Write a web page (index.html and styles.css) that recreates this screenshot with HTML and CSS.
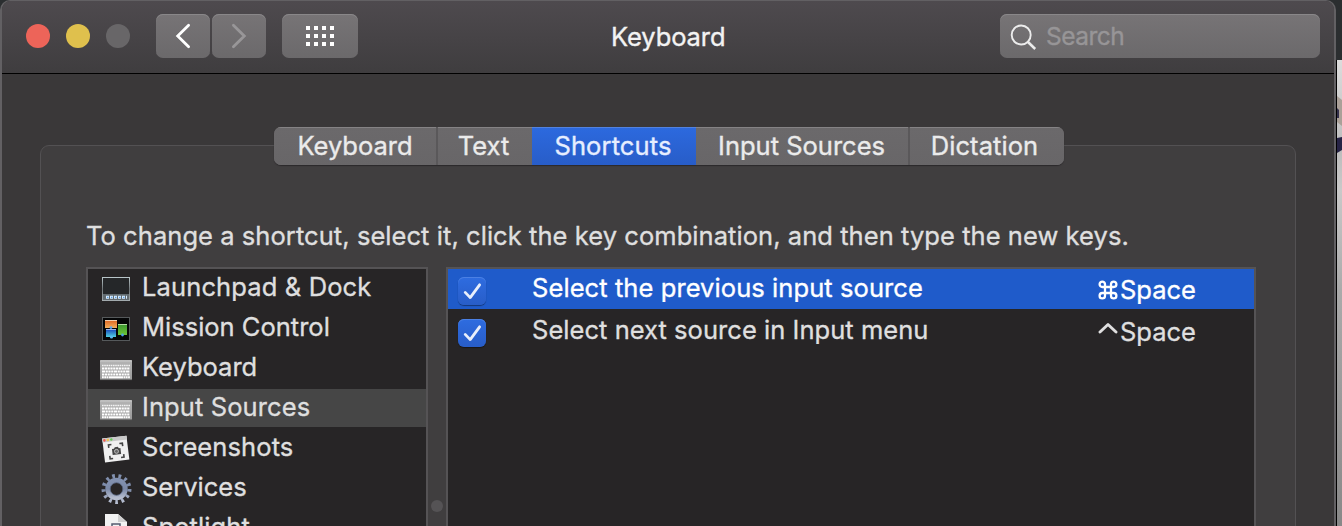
FILE: index.html
```html
<!DOCTYPE html>
<html lang="en">
<head>
<meta charset="utf-8">
<title>Keyboard</title>
<link rel="stylesheet" href="styles.css">
</head>
<body>
<svg class="defs" width="0" height="0">
  <defs>
    <linearGradient id="alu" x1="0" y1="0" x2="0" y2="1"><stop offset="0" stop-color="#b5b5b5"/><stop offset="1" stop-color="#999"/></linearGradient>
    <linearGradient id="frame" x1="0" y1="0" x2="0" y2="1"><stop offset="0" stop-color="#b8c5c8"/><stop offset=".5" stop-color="#70777a"/><stop offset="1" stop-color="#a2aaad"/></linearGradient>
    <linearGradient id="orange" x1="0" y1="0" x2="0" y2="1"><stop offset="0" stop-color="#dd6422"/><stop offset="1" stop-color="#f5b05a"/></linearGradient>
    <linearGradient id="green" x1="0" y1="0" x2="0" y2="1"><stop offset="0" stop-color="#3a9632"/><stop offset="1" stop-color="#6cc636"/></linearGradient>
    <linearGradient id="blue" x1="0" y1="0" x2="0" y2="1"><stop offset="0" stop-color="#1741ba"/><stop offset="1" stop-color="#4fd0e0"/></linearGradient>
    <linearGradient id="steel" x1="0" y1="0" x2="0" y2="1"><stop offset="0" stop-color="#8291b0"/><stop offset=".5" stop-color="#7a88a6"/><stop offset="1" stop-color="#b5bdcf"/></linearGradient>
    <symbol id="keys" viewBox="0 0 32 22">
      <rect x="0" y="0" width="32" height="20" rx="1" fill="url(#alu)"/>
      <path d="M0 1H32" stroke="#c9c9c9" stroke-width="1"/>
      <path d="M0 19.6H32" stroke="#6e6e6e" stroke-width="1"/>
      <path d="M2 5.5H30" stroke="#f4f4f4" stroke-width="1.4" stroke-dasharray="1.6 .6"/>
      <path d="M2 8.5H30M2 14.5H30" stroke="#fff" stroke-width="2.1" stroke-dasharray="2.2 .6"/>
      <path d="M2 11.5H30" stroke="#fff" stroke-width="2.1" stroke-dasharray="3 .6 2.2 .6 2.2 .6 2.2 .6"/>
      <path d="M2 17.3H8.5M23.5 17.3H30" stroke="#fff" stroke-width="2" stroke-dasharray="1.8 .5"/>
      <path d="M9 17.3H23" stroke="#fff" stroke-width="2"/>
    </symbol>
  </defs>
</svg>
<div class="desktop">
  <main class="window">
    <header class="titlebar">
      <div class="lights"><i class="light red"></i><i class="light yellow"></i><i class="light gray"></i></div>
      <div class="nav">
        <button class="tool"><svg width="54" height="44" viewBox="0 0 54 44" fill="none"><path d="M32.6 11.2L21.7 22L32.6 32.8" stroke="#fff" stroke-width="2.8" stroke-linecap="round"/></svg></button>
        <button class="tool"><svg width="54" height="44" viewBox="0 0 54 44" fill="none"><path d="M21.4 11.2L32.3 22L21.4 32.8" stroke="#989698" stroke-width="2.8" stroke-linecap="round"/></svg></button>
      </div>
      <button class="tool grid"><svg width="76" height="44" viewBox="0 0 76 44" fill="none"><path d="M24 14H52M24 22H52M24 30H52" stroke="#fff" stroke-width="4" stroke-dasharray="4 4"/></svg></button>
      <h1 class="title">Keyboard</h1>
      <div class="search">
        <svg width="28" height="28" viewBox="0 0 28 28" fill="none" stroke="#ececec"><circle cx="11.2" cy="11" r="9.5" stroke-width="1.9"/><path d="M18 18L25.2 25" stroke-width="2.5"/></svg>
        <span class="hint">Search</span>
      </div>
    </header>
    <section class="panel">
      <nav class="tabs">
        <div class="tab t1"><span>Keyboard</span></div>
        <div class="tab t2"><span>Text</span></div>
        <div class="tab t3 active"><span>Shortcuts</span></div>
        <div class="tab t4"><span>Input Sources</span></div>
        <div class="tab t5"><span>Dictation</span></div>
      </nav>
      <p class="intro"><span>To change a shortcut, select it, click the key combination, and then type the new keys.</span></p>
      <div class="split">
        <ul class="list">
          <li><svg class="icon" width="32" height="38" viewBox="0 0 32 38"><rect x="2.5" y="8.5" width="27" height="23" fill="#252729" stroke="url(#frame)"/><rect x="3" y="25" width="26" height="6" fill="#626b70"/><path d="M6 28.3H27" stroke="#d8edff" stroke-width="3" stroke-dasharray="3 1"/><path d="M7 28.4H26" stroke="#5c9de0" stroke-width="1.4" stroke-dasharray="1.4 2.6"/></svg><span class="l1">Launchpad &amp; Dock</span></li>
          <li><svg class="icon" width="32" height="38" viewBox="0 0 32 38"><rect x="2.5" y="8.5" width="27" height="23" fill="#050607" stroke="#55595b"/><rect x="5" y="11" width="12" height="8" fill="url(#orange)"/><path d="M5 11.5H17" stroke="#f4cfae"/><rect x="18" y="15" width="9" height="11" fill="url(#green)"/><path d="M18 15.5H27" stroke="#b5dea4"/><rect x="6" y="20" width="10" height="8" fill="url(#blue)"/><path d="M6 20.5H16" stroke="#9fb6e8"/><circle cx="11" cy="18.6" r="1.4" fill="#62a9ee"/><circle cx="22.5" cy="26" r="1.4" fill="#4c9ee8"/><circle cx="11.5" cy="28" r="1.6" fill="#5abaf2"/></svg><span class="l2">Mission Control</span></li>
          <li><svg class="icon keys" width="32" height="22"><use href="#keys"/></svg><span class="l3">Keyboard</span></li>
          <li class="selected"><svg class="icon keys" width="32" height="22"><use href="#keys"/></svg><span class="l4">Input Sources</span></li>
          <li><svg class="icon" width="32" height="38" viewBox="0 0 32 38"><g transform="rotate(-7 16 20)"><rect x="3.5" y="8" width="24.5" height="24" fill="#f0f0f0"/><rect x="3.5" y="8" width="24.5" height="4" fill="#c9c9c9"/><circle cx="5.5" cy="10" r="1.3" fill="#f25b52"/><circle cx="9" cy="10" r="1.3" fill="#edc14c"/><circle cx="12.5" cy="10" r="1.3" fill="#68c95c"/><path d="M9 18V15H12M20 15H23V18M23 26V29H20M12 29H9V26" fill="none" stroke="#444" stroke-width="1.6"/><path d="M12 19.5H14L15 18H18L19 19.5H20.5V25.5H12Z" fill="#444"/><circle cx="16.2" cy="22.4" r="2" fill="#666" stroke="#ccc" stroke-width=".8"/></g></svg><span class="l5">Screenshots</span></li>
          <li><svg class="icon" width="32" height="38" viewBox="0 0 32 38"><g fill="none" stroke="url(#steel)"><circle cx="16.5" cy="20" r="8.7" stroke-width="5"/><circle cx="16.5" cy="20" r="13" stroke-width="4" stroke-dasharray="2.7 3.583"/></g><circle cx="16.5" cy="20" r="6.3" fill="none" stroke="#56637f" stroke-width=".8"/></svg><span class="l6">Services</span></li>
          <li><svg class="icon" width="32" height="38" viewBox="0 0 32 38"><path d="M5 5H18L27 13V38H5Z" fill="#f2f2f2"/><path d="M18 5V13H27Z" fill="#d0d0d0"/><path d="M12 22V15H20V22M14 18H18" fill="none" stroke="#555c70" stroke-width="1.5"/></svg><span class="l7">Spotlight</span></li>
        </ul>
        <div class="divider"><i></i></div>
        <div class="table">
          <div class="row on">
            <svg class="check" width="28" height="28" viewBox="0 0 28 28" fill="none"><path d="M7.2 15.4L12.2 20.6L21.6 7.8" stroke="#e9effb" stroke-width="2.8" stroke-linecap="round" stroke-linejoin="round"/></svg>
            <span class="name n1">Select the previous input source</span>
            <span class="combo"><svg width="20" height="20" viewBox="0 0 20 20" fill="none" stroke="#fff" stroke-width="2.3"><path d="M7 7H13V13H7ZM7 7V4.300A2.700 2.700 0 1 0 4.300 7H7M13 7V4.300A2.700 2.700 0 1 1 15.700 7H13M13 13H15.700A2.700 2.700 0 1 1 13 15.700V13M7 13H4.300A2.700 2.700 0 1 0 7 15.700V13"/></svg><span class="key">Space</span></span>
          </div>
          <div class="row">
            <svg class="check" width="28" height="28" viewBox="0 0 28 28" fill="none"><path d="M7.2 15.4L12.2 20.6L21.6 7.8" stroke="#e9effb" stroke-width="2.8" stroke-linecap="round" stroke-linejoin="round"/></svg>
            <span class="name n2">Select next source in Input menu</span>
            <span class="combo"><svg width="20" height="20" viewBox="0 0 20 20" fill="none" stroke="#dfdfdf" stroke-width="2.9" stroke-linecap="round" stroke-linejoin="round"><path d="M2 10L10 2.5L18 10"/></svg><span class="key">Space</span></span>
          </div>
        </div>
      </div>
    </section>
  </main>
  <aside class="behind"><svg width="5" height="466" viewBox="0 0 5 466"><path d="M0 36L5 40V66L0 62Z" fill="#aaa098"/><path d="M0 48L2 50V58H0Z" fill="#33304b"/><path d="M0 78L5 77V90L0 93Z" fill="#262345"/></svg></aside>
</div>
</body>
</html>
```
FILE: styles.css
```css
* { box-sizing: border-box; }
body { margin: 0; overflow: hidden; background: #000; font-family: Inter, "Liberation Sans", sans-serif; font-size: 25.5px; line-height: 38px; color: #dfdfdf; white-space: nowrap; -webkit-text-stroke: .35px currentColor; }
.defs { position: absolute; }
svg { display: block; flex: none; }
.desktop { display: flex; width: 1342px; height: 526px; overflow: hidden; background: linear-gradient(#2b2e30 60px, #000 60px); }
.window { flex: none; width: 1336px; height: 540px; background: #3a3839; border: solid #626063; border-width: 1px 2px 0; border-radius: 10px 10px 0 0; overflow: hidden; margin-right: 1px; }
.behind { width: 5px; margin-top: 60px; height: 466px; background: linear-gradient(#dcdcdc, #bcbcbc 90px, #c9c9c9 130px, #aaa 230px, #888); }

.titlebar { display: flex; height: 73px; padding: 13px 14px 0 24px; background: linear-gradient(#4e4a4e, #3f3d3f); border-bottom: 1px solid #000; }
.lights { display: flex; gap: 16px; padding-top: 10px; width: 130px; }
.light { width: 24px; height: 24px; border-radius: 50%; }
.red { background: #ed6459; }
.yellow { background: #dfc04d; }
.gray { background: #686668; }
.nav { display: flex; gap: 2px; }
.tool { padding: 0; border: 0; width: 54px; height: 44px; border-radius: 7px; background: linear-gradient(#777476, #6b696b); box-shadow: inset 0 1px #898789; }
.grid { width: 76px; margin-left: 16px; }
.title { margin: 4px 0 0 253px; width: 389px; font-size: 25.5px; font-weight: 400; color: #f3f3f3; letter-spacing: -.1px; }
.search { display: flex; width: 320px; height: 44px; padding: 10px 0 0 10px; border-radius: 7px; background: linear-gradient(#777476, #6b696b); box-shadow: inset 0 1px #898789; }
.hint { margin: -7px 0 0 8px; font-size: 24.5px; letter-spacing: -.5px; color: #979597; }

.panel { margin: 71px 38px 0; height: 400px; border: 1px solid #535153; border-radius: 9px; background: #403e3f; padding: 0 39px 0 45px; }
.tabs { display: flex; width: 790px; height: 38px; margin: -19px 0 0 188px; border-radius: 7px; background: #696769; overflow: hidden; box-shadow: 0 1px 1px #2b292b; color: #ebebeb; }
.tab { display: flex; justify-content: center; border-right: 2px solid #5a585a; background: linear-gradient(#858385 1px, #6b696b 1px, #686668); }
.t1 { width: 164px; }
.t2 { width: 94px; border-right: 0; padding-right: 3px; }
.t3 { width: 164px; border-right: 0; padding-right: 2px; letter-spacing: .12px; }
.t4 { width: 214px; padding-right: 1px; }
.t5 { width: 154px; border-right: 0; padding-right: 5px; letter-spacing: .08px; }
.active { background: linear-gradient(#5282df 1px, #2c69de 1px, #285dc8); color: #e6eeff; }
.intro { margin: 52px 0 0; height: 38px; letter-spacing: .06px; }
.split { display: flex; margin-top: 12px; }
.list { flex: none; width: 342px; height: 280px; margin: 0; padding: 0; list-style: none; border: 2px solid #555355; background: #272526; overflow: hidden; }
.list li { display: flex; height: 38px; margin-bottom: 2px; padding-left: 12px; line-height: 36px; }
.list .selected { background: #464646; }
.l1 { letter-spacing: .13px; }
.l4, .l5, .l7 { letter-spacing: .1px; }
.icon { margin-right: 10px; }
.keys { margin-top: 11px; }
.divider { width: 18px; padding: 233px 0 0 3px; }
.divider i { display: block; width: 12px; height: 12px; border-radius: 50%; background: #555355; }
.table { width: 810px; height: 280px; border: 2px solid #555355; background: #272526; }
.row { display: flex; height: 40px; margin-bottom: 2px; padding-left: 10px; }
.on { background: #1f5bca; color: #fff; }
.check { margin-top: 8px; border-radius: 6px; background: linear-gradient(#2e6ce0, #285dc8); box-shadow: 0 1px 1px #0006, inset 0 1px #4b80e4; }
.name { width: 566px; margin-left: 46px; }
.n1 { letter-spacing: .08px; }
.n2 { letter-spacing: .04px; }
.combo { display: flex; }
.combo svg { margin-top: 11px; }
.key { padding-top: 2px; margin-left: 2px; }
```
